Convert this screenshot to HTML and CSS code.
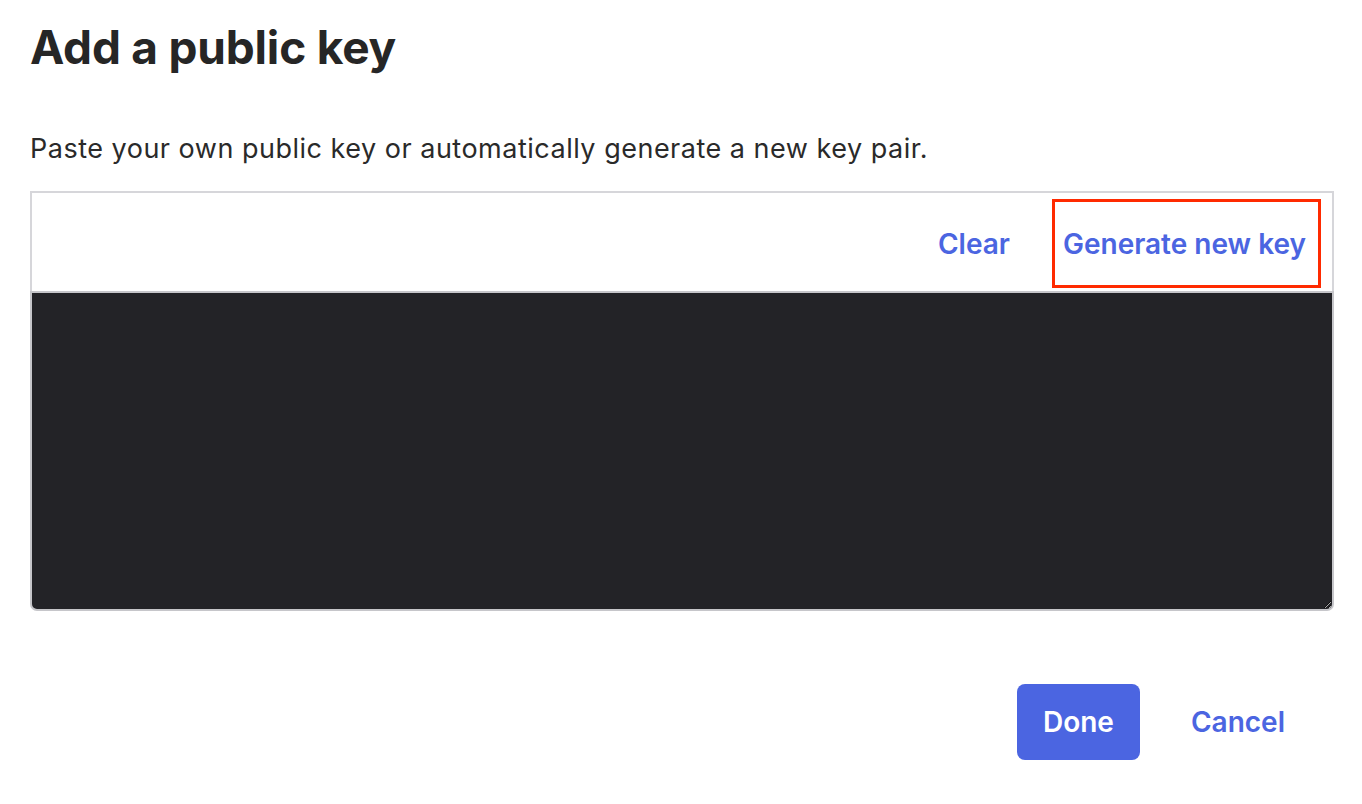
FILE: index.html
```html
<!DOCTYPE html>
<html lang="en">
<head>
<meta charset="utf-8">
<title>Add a public key</title>
<link rel="stylesheet" href="styles.css">
</head>
<body>
<main class="dialog">
  <h1 class="title">Add a public key</h1>
  <p class="lead">Paste your own public key or automatically generate a new key pair.</p>
  <div class="editor">
    <div class="toolbar">
      <button class="link-btn tool-btn" type="button">Clear</button>
      <button class="link-btn tool-btn highlighted" type="button">Generate new key</button>
    </div>
    <textarea class="key-input" aria-label="Public key"></textarea>
  </div>
  <div class="footer">
    <button class="primary-btn" type="button">Done</button>
    <button class="link-btn cancel" type="button">Cancel</button>
  </div>
</main>
</body>
</html>
```
FILE: styles.css
```css
html, body {
  margin: 0;
  padding: 0;
  background: #ffffff;
}
body {
  font-family: Inter, "Noto Sans", "Liberation Sans", sans-serif;
  color: #262626;
}
.dialog {
  padding: 0 0 0 30px;
  width: 1304px;
}
.title {
  margin: 0;
  padding-top: 19px;
  font-size: 46px;
  line-height: 56px;
  font-weight: 700;
  letter-spacing: -0.2px;
  color: #262626;
}
.lead {
  margin: 0;
  padding-top: 58px;
  font-size: 27px;
  line-height: 32px;
  font-weight: 400;
  letter-spacing: 0.5px;
  color: #2a2a2a;
}
.editor {
  margin-top: 26px;
  width: 1304px;
}
.toolbar {
  display: flex;
  justify-content: flex-end;
  align-items: flex-end;
  gap: 38px;
  height: 95px;
  padding-right: 11px;
  padding-bottom: 3px;
  box-sizing: content-box;
  border: 2px solid #d6d6da;
  border-bottom: none;
}
.link-btn {
  background: none;
  border: 3px solid transparent;
  font-family: inherit;
  font-size: 28px;
  font-weight: 600;
  color: #4b65e1;
  padding: 0;
  cursor: pointer;
}
.tool-btn {
  height: 89px;
  padding: 0 1px;
}
.highlighted {
  border-color: #ff2a00;
  padding: 0 12px 0 8px;
}
.key-input {
  display: block;
  box-sizing: border-box;
  width: 1304px;
  height: 320px;
  margin: 0;
  background: #232327;
  border: 2px solid #c6c6ca;
  border-radius: 0 0 7px 7px;
  resize: vertical;
  color: #ffffff;
}
.footer {
  display: flex;
  justify-content: flex-end;
  align-items: center;
  gap: 48px;
  margin-top: 73px;
  padding-right: 46px;
}
.primary-btn {
  width: 123px;
  height: 76px;
  border: none;
  border-radius: 8px;
  background: #4b65e1;
  color: #ffffff;
  font-family: inherit;
  font-size: 28px;
  font-weight: 600;
  cursor: pointer;
}
.cancel {
  font-size: 28px;
}
```
